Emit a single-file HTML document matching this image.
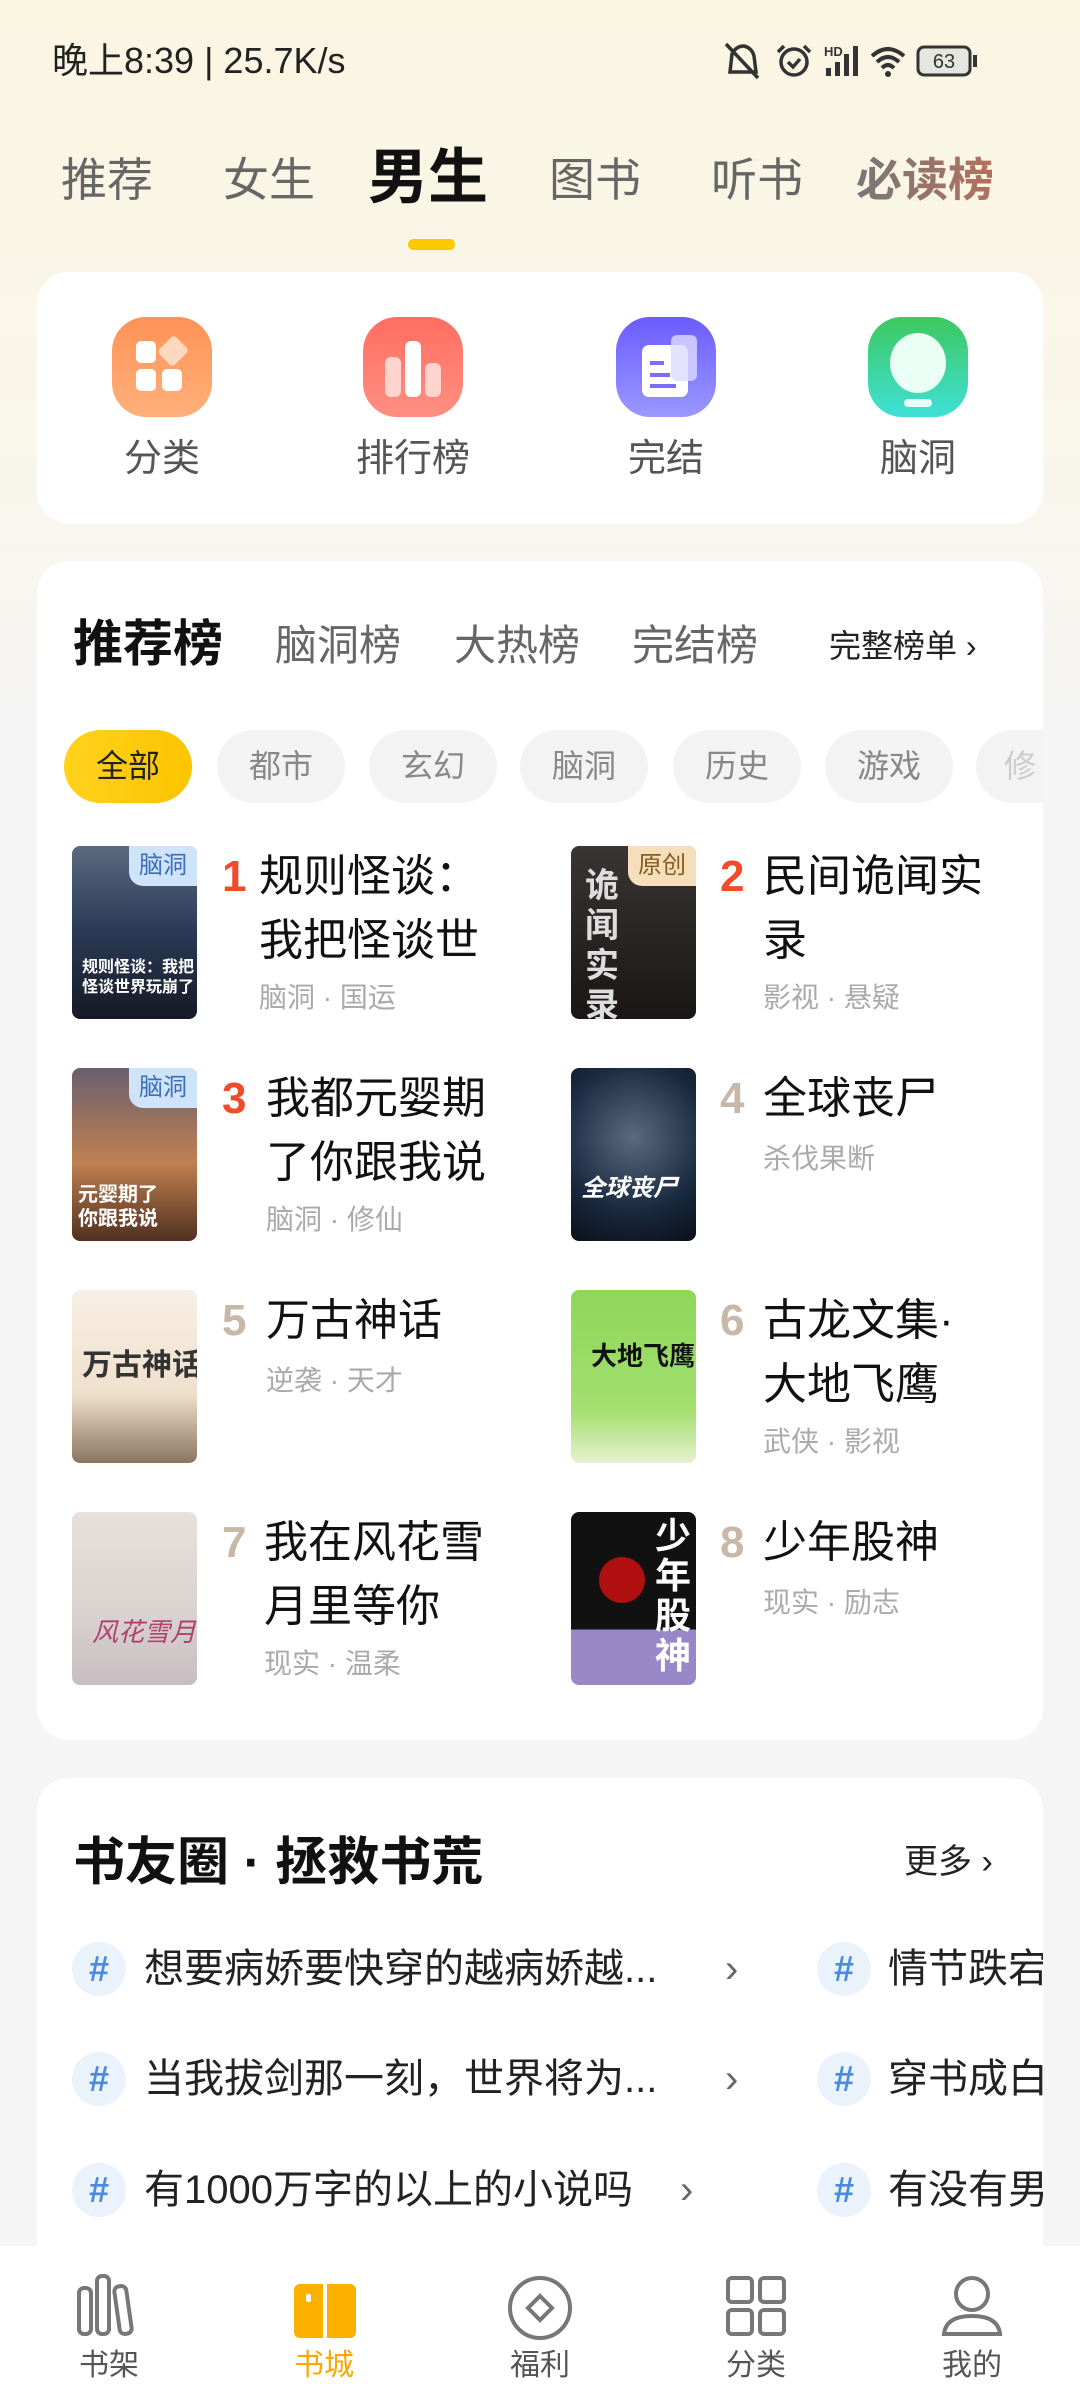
<!DOCTYPE html>
<html style="width:1080px;height:2400px;overflow:hidden"><head><meta charset="utf-8"><style>
*{margin:0;padding:0;box-sizing:border-box}
body{width:1080px;height:2400px;position:relative;overflow:hidden;font-family:"Liberation Sans","Noto Sans CJK SC",sans-serif;background:linear-gradient(180deg,#fbf6e2 0%,#f9f6ea 18%,#f5f5f5 30%,#f5f5f5 100%)}
.a{position:absolute;white-space:nowrap}
.card{position:absolute;left:37px;width:1006px;background:#fff;border-radius:32px}
.tab{position:absolute;top:150px;font-size:46px;color:#666;line-height:60px}
.ic{position:absolute;top:317px;width:100px;height:100px;border-radius:34px}
.il{position:absolute;top:434px;font-size:38px;color:#555;width:200px;text-align:center;line-height:50px}
.chip{position:absolute;top:730px;width:128px;height:73px;border-radius:37px;background:#f3f3f3;color:#888;font-size:32px;line-height:73px;text-align:center}
.cov{position:absolute;width:125px;height:173px;border-radius:8px;overflow:hidden}
.badge{position:absolute;right:0;top:0;width:68px;height:40px;border-bottom-left-radius:14px;font-size:24px;line-height:40px;text-align:center}
.num{position:absolute;font-size:44px;line-height:64px;font-weight:bold}
.tt{position:absolute;font-size:44px;line-height:64px;color:#111;white-space:normal;width:230px}
.tg{position:absolute;font-size:28px;color:#aaa;line-height:40px}
.hs{position:absolute;width:54px;height:54px;border-radius:50%;background:#eaf2fc;color:#4a8ae0;font-size:36px;font-weight:bold;text-align:center;line-height:54px}
.tp{position:absolute;font-size:40px;color:#222;line-height:54px}
.nl{position:absolute;top:2340px;width:120px;text-align:center;font-size:30px;color:#555}
</style></head><body>
<div class="a" style="left:52px;top:38px;font-size:36px;color:#222;line-height:46px">晚上8:39 | 25.7K/s</div>
<svg class="a" style="left:722px;top:40px" width="300" height="44" viewBox="0 0 300 44">
<g fill="none" stroke="#333" stroke-width="3.5"><path d="M8 32 L10 14 Q14 6 22 6 Q30 8 32 16 L34 32 Z M4 4 L36 38"/><circle cx="72" cy="22" r="13"/><path d="M62 6 l-6 6 M82 6 l6 6 M66 22 l5 5 7-8"/></g>
<text x="102" y="16" font-size="13" font-weight="bold" fill="#333" font-family="Liberation Sans">HD</text>
<g fill="#333"><rect x="104" y="28" width="5" height="8"/><rect x="113" y="22" width="5" height="14"/><rect x="122" y="14" width="5" height="22"/><rect x="131" y="6" width="5" height="30"/></g>
<g fill="none" stroke="#333" stroke-width="4"><path d="M150 16 Q166 2 182 16 M155 22 Q166 12 177 22 M160 28 Q166 22 172 28"/></g><circle cx="166" cy="34" r="3" fill="#333"/>
<rect x="196" y="7" width="52" height="28" rx="6" fill="#e6e6e0" stroke="#333" stroke-width="3"/><rect x="251" y="15" width="4" height="12" fill="#333"/>
<text x="222" y="28" font-size="20" fill="#333" text-anchor="middle" font-family="Liberation Sans">63</text></svg>

<div class="tab" style="left:61px">推荐</div>
<div class="tab" style="left:223px">女生</div>
<div class="tab" style="left:368px;top:142px;font-size:60px;color:#111;font-weight:bold;line-height:72px">男生</div>
<div class="tab" style="left:549px">图书</div>
<div class="tab" style="left:711px">听书</div>
<div class="tab" style="left:856px;font-weight:bold;background:linear-gradient(90deg,#777,#b5705e);-webkit-background-clip:text;color:transparent">必读榜</div>
<div class="a" style="left:408px;top:239px;width:47px;height:11px;border-radius:6px;background:#fcc800"></div>

<div class="card" style="top:272px;height:252px"></div>
<div class="ic" style="left:112px;background:linear-gradient(180deg,#ff9256,#ffb07a)"><div class="a" style="left:24px;top:24px;width:20px;height:22px;background:#fff;border-radius:5px"></div><div class="a" style="left:24px;top:52px;width:20px;height:22px;background:#fff;border-radius:5px"></div><div class="a" style="left:50px;top:52px;width:20px;height:22px;background:#fff;border-radius:5px"></div><div class="a" style="left:50px;top:22px;width:22px;height:24px;background:#ffd9bf;transform:rotate(45deg);border-radius:4px"></div></div>
<div class="ic" style="left:363px;background:linear-gradient(180deg,#ff6e62,#ff8f80)"><div class="a" style="left:22px;top:40px;width:16px;height:40px;background:#ffd4cf;border-radius:6px"></div><div class="a" style="left:42px;top:24px;width:16px;height:56px;background:#fff;border-radius:6px"></div><div class="a" style="left:62px;top:46px;width:16px;height:34px;background:#ffd4cf;border-radius:6px"></div></div>
<div class="ic" style="left:616px;background:linear-gradient(180deg,#6b5cff,#9a98ff)"><div class="a" style="left:26px;top:28px;width:46px;height:52px;background:#fff;border-radius:7px"></div><div class="a" style="left:34px;top:44px;width:14px;height:4px;background:#7b6cff"></div><div class="a" style="left:34px;top:56px;width:20px;height:4px;background:#7b6cff"></div><div class="a" style="left:34px;top:67px;width:26px;height:4px;background:#7b6cff"></div><div class="a" style="left:55px;top:18px;width:26px;height:46px;background:rgba(220,220,255,.8);border-radius:6px"></div></div>
<div class="ic" style="left:868px;background:linear-gradient(180deg,#3dc85e,#3ee0d8)"><div class="a" style="left:22px;top:16px;width:56px;height:60px;background:#eafff5;border-radius:50%"></div><div class="a" style="left:36px;top:82px;width:28px;height:8px;background:#eafff5;border-radius:4px"></div></div>
<div class="il" style="left:62px">分类</div>
<div class="il" style="left:313px">排行榜</div>
<div class="il" style="left:566px">完结</div>
<div class="il" style="left:818px">脑洞</div>

<div class="card" style="top:561px;height:1179px"></div>
<div class="a" style="left:73px;top:612px;font-size:50px;font-weight:bold;color:#111;line-height:64px">推荐榜</div>
<div class="a" style="left:275px;top:616px;font-size:42px;color:#666;line-height:60px">脑洞榜</div>
<div class="a" style="left:454px;top:616px;font-size:42px;color:#666;line-height:60px">大热榜</div>
<div class="a" style="left:632px;top:616px;font-size:42px;color:#666;line-height:60px">完结榜</div>
<div class="a" style="left:829px;top:624px;font-size:32px;color:#222;line-height:44px">完整榜单 ›</div>

<div class="chip" style="left:64px;background:linear-gradient(90deg,#ffd21c,#fcc400);color:#222">全部</div>
<div class="chip" style="left:217px">都市</div>
<div class="chip" style="left:369px">玄幻</div>
<div class="chip" style="left:520px">脑洞</div>
<div class="chip" style="left:673px">历史</div>
<div class="chip" style="left:825px">游戏</div>
<div class="chip" style="left:976px;width:67px;border-radius:37px 0 0 37px;color:#ccc;text-align:left;padding-left:28px">修</div>

<div class="cov" style="left:72px;top:846px;background:linear-gradient(180deg,#5a6a80,#2a3a55 50%,#151a25)"><div class="badge" style="background:#cfe3fb;color:#3a6fb8">脑洞</div><div class="a" style="left:10px;top:112px;font-size:16px;color:#fff;font-weight:bold;line-height:20px">规则怪谈：我把<br>怪谈世界玩崩了</div></div>
<div class="num" style="left:222px;top:845px;color:#f24b2a">1</div>
<div class="tt" style="left:259px;top:845px">规则怪谈：我把怪谈世</div>
<div class="tg" style="left:259px;top:978px">脑洞 · 国运</div>

<div class="cov" style="left:571px;top:846px;background:linear-gradient(180deg,#3a3535,#1a1616)"><div class="badge" style="background:#f4dfba;color:#8a5a20">原创</div><div class="a" style="left:14px;top:20px;font-size:34px;color:#ddd;font-weight:bold;line-height:40px;white-space:normal;width:40px">诡闻实录</div></div>
<div class="num" style="left:720px;top:845px;color:#f24b2a">2</div>
<div class="tt" style="left:763px;top:845px">民间诡闻实录</div>
<div class="tg" style="left:763px;top:978px">影视 · 悬疑</div>

<div class="cov" style="left:72px;top:1068px;background:linear-gradient(180deg,#6a6070,#c08050 55%,#503020)"><div class="badge" style="background:#cfe3fb;color:#3a6fb8">脑洞</div><div class="a" style="left:6px;top:115px;font-size:20px;color:#fff;font-weight:bold;line-height:24px">元婴期了<br>你跟我说</div></div>
<div class="num" style="left:222px;top:1067px;color:#f24b2a">3</div>
<div class="tt" style="left:266px;top:1067px">我都元婴期了你跟我说</div>
<div class="tg" style="left:266px;top:1200px">脑洞 · 修仙</div>

<div class="cov" style="left:571px;top:1068px;background:radial-gradient(circle at 50% 40%,#5a6a80,#1a2a40 60%,#0a1018)"><div class="a" style="left:10px;top:100px;font-size:24px;color:#fff;font-weight:bold;font-style:italic">全球丧尸</div></div>
<div class="num" style="left:720px;top:1067px;color:#c8b8a8">4</div>
<div class="tt" style="left:763px;top:1067px">全球丧尸</div>
<div class="tg" style="left:763px;top:1139px">杀伐果断</div>

<div class="cov" style="left:72px;top:1290px;background:linear-gradient(180deg,#f8efe4,#efe0cc 60%,#8a7560)"><div class="a" style="left:10px;top:50px;font-size:30px;color:#333;font-weight:bold">万古神话</div></div>
<div class="num" style="left:222px;top:1289px;color:#c8b8a8">5</div>
<div class="tt" style="left:266px;top:1289px">万古神话</div>
<div class="tg" style="left:266px;top:1361px">逆袭 · 天才</div>

<div class="cov" style="left:571px;top:1290px;background:linear-gradient(180deg,#8ed65a,#a4e070 70%,#e8f0d0)"><div class="a" style="left:20px;top:46px;font-size:26px;color:#111;font-weight:bold">大地飞鹰</div></div>
<div class="num" style="left:720px;top:1289px;color:#c8b8a8">6</div>
<div class="tt" style="left:763px;top:1289px">古龙文集·大地飞鹰</div>
<div class="tg" style="left:763px;top:1422px">武侠 · 影视</div>

<div class="cov" style="left:72px;top:1512px;background:linear-gradient(180deg,#e8e0da,#d8d2d0 60%,#c8bcc0)"><div class="a" style="left:20px;top:100px;font-size:26px;color:#b04070;font-style:italic">风花雪月</div></div>
<div class="num" style="left:222px;top:1511px;color:#c8b8a8">7</div>
<div class="tt" style="left:264px;top:1511px">我在风花雪月里等你</div>
<div class="tg" style="left:264px;top:1644px">现实 · 温柔</div>

<div class="cov" style="left:571px;top:1512px;background:linear-gradient(180deg,#111 0%,#111 68%,#9888c8 68%)"><div class="a" style="left:28px;top:45px;width:46px;height:46px;border-radius:50%;background:#b01010"></div><div class="a" style="left:84px;top:4px;font-size:36px;color:#fff;font-weight:bold;line-height:40px;white-space:normal;width:40px">少年股神</div></div>
<div class="num" style="left:720px;top:1511px;color:#c8b8a8">8</div>
<div class="tt" style="left:763px;top:1511px">少年股神</div>
<div class="tg" style="left:763px;top:1583px">现实 · 励志</div>

<div class="card" style="top:1778px;height:468px;border-radius:32px 32px 0 0"></div>
<div class="a" style="left:73px;top:1830px;font-size:52px;font-weight:bold;color:#111;line-height:66px">书友圈 · 拯救书荒</div>
<div class="a" style="left:904px;top:1840px;font-size:34px;color:#222;line-height:44px">更多 ›</div>

<div class="hs" style="left:72px;top:1942px">#</div><div class="tp" style="left:144px;top:1942px">想要病娇要快穿的越病娇越...</div><div class="tp" style="left:725px;top:1942px;color:#666">›</div>
<div class="hs" style="left:817px;top:1942px">#</div><div class="tp" style="left:888px;top:1942px">情节跌宕</div>
<div class="hs" style="left:72px;top:2052px">#</div><div class="tp" style="left:144px;top:2052px">当我拔剑那一刻，世界将为...</div><div class="tp" style="left:725px;top:2052px;color:#666">›</div>
<div class="hs" style="left:817px;top:2052px">#</div><div class="tp" style="left:888px;top:2052px">穿书成白</div>
<div class="hs" style="left:72px;top:2163px">#</div><div class="tp" style="left:144px;top:2163px">有1000万字的以上的小说吗</div><div class="tp" style="left:680px;top:2163px;color:#666">›</div>
<div class="hs" style="left:817px;top:2163px">#</div><div class="tp" style="left:888px;top:2163px">有没有男</div>
<div class="a" style="left:1043px;top:1900px;width:37px;height:346px;background:#f5f5f5"></div>

<div class="a" style="left:0;top:2246px;width:1080px;height:154px;background:#fff"></div>
<svg class="a" style="left:0;top:2270px" width="1080" height="70" viewBox="0 0 1080 70">
<g fill="none" stroke="#777" stroke-width="4"><rect x="79" y="18" width="12" height="46" rx="5"/><rect x="97" y="6" width="12" height="58" rx="5"/><rect x="117" y="16" width="12" height="48" rx="5" transform="rotate(-8 123 40)"/>
<circle cx="540" cy="38" r="30"/><path d="M540 26 L552 38 540 50 528 38Z"/>
<rect x="728" y="8" width="24" height="24" rx="4"/><rect x="760" y="8" width="24" height="24" rx="4"/><rect x="728" y="40" width="24" height="24" rx="4"/><rect x="760" y="40" width="24" height="24" rx="4"/>
<circle cx="972" cy="24" r="16"/><path d="M944 64 Q946 46 972 46 Q998 46 1000 64 Z"/></g>
<rect x="294" y="14" width="62" height="54" rx="6" fill="#fcb000"/><rect x="323" y="14" width="4" height="54" fill="#fff"/><rect x="306" y="24" width="5" height="8" rx="2" fill="#fff"/></svg>
<div class="nl" style="left:49px">书架</div>
<div class="nl" style="left:264px;color:#fca800">书城</div>
<div class="nl" style="left:480px">福利</div>
<div class="nl" style="left:696px">分类</div>
<div class="nl" style="left:912px">我的</div>
</body></html>
